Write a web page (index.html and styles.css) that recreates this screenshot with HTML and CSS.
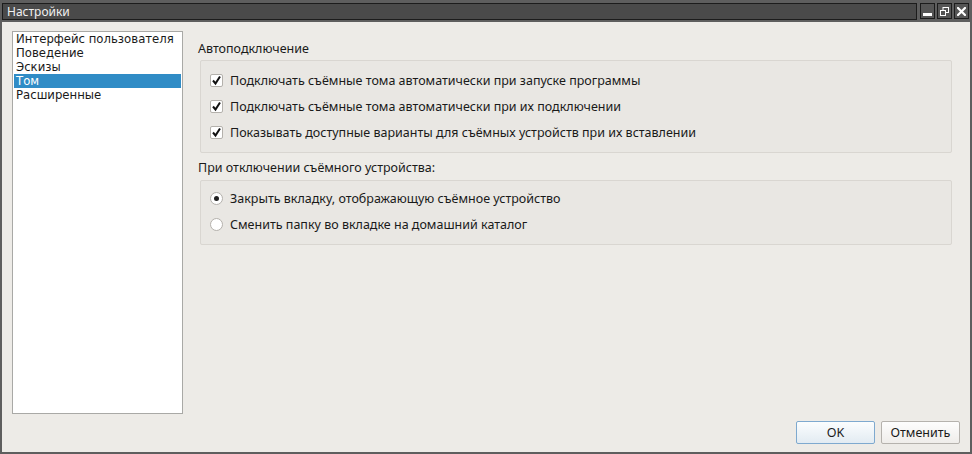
FILE: index.html
```html
<!DOCTYPE html>
<html lang="ru">
<head>
<meta charset="utf-8">
<title>Настройки</title>
<link rel="stylesheet" href="styles.css">
</head>
<body>
<div class="window">
  <div class="titlebar">
    <div class="title-field"><span class="title-text">Настройки</span></div>
    <div class="tb-btn" aria-label="minimize">
      <svg width="9" height="9" viewBox="0 0 9 9"><rect x="0" y="6" width="9" height="3" fill="#fff"/></svg>
    </div>
    <div class="tb-btn" aria-label="restore">
      <svg width="9" height="9" viewBox="0 0 9 9"><rect x="3" y="0.5" width="5.5" height="5" fill="none" stroke="#fff" stroke-width="1"/><rect x="0.5" y="3.5" width="5" height="5" fill="#555" stroke="#fff" stroke-width="1"/></svg>
    </div>
    <div class="tb-btn" aria-label="close">
      <svg width="9" height="9" viewBox="0 0 9 9"><path d="M1 1 L8 8 M8 1 L1 8" stroke="#fff" stroke-width="2.2" stroke-linecap="square"/></svg>
    </div>
  </div>
  <div class="body">
    <div class="main">
      <ul class="list">
        <li>Интерфейс пользователя</li>
        <li>Поведение</li>
        <li>Эскизы</li>
        <li class="selected">Том</li>
        <li>Расширенные</li>
      </ul>
      <div class="panel">
        <div class="group-label first">Автоподключение</div>
        <div class="group g1">
          <label class="row"><span class="check"><svg width="11" height="11" viewBox="0 0 11 11"><path d="M2 5.5 L4.5 8.5 L9 1.5" fill="none" stroke="#111" stroke-width="2"/></svg></span>Подключать съёмные тома автоматически при запуске программы</label>
          <label class="row"><span class="check"><svg width="11" height="11" viewBox="0 0 11 11"><path d="M2 5.5 L4.5 8.5 L9 1.5" fill="none" stroke="#111" stroke-width="2"/></svg></span>Подключать съёмные тома автоматически при их подключении</label>
          <label class="row"><span class="check"><svg width="11" height="11" viewBox="0 0 11 11"><path d="M2 5.5 L4.5 8.5 L9 1.5" fill="none" stroke="#111" stroke-width="2"/></svg></span>Показывать доступные варианты для съёмных устройств при их вставлении</label>
        </div>
        <div class="group-label second">При отключении съёмного устройства:</div>
        <div class="group g2">
          <label class="row"><span class="radio on"></span>Закрыть вкладку, отображающую съёмное устройство</label>
          <label class="row"><span class="radio"></span>Сменить папку во вкладке на домашний каталог</label>
        </div>
      </div>
    </div>
    <div class="footer">
      <button class="btn default">OK</button>
      <button class="btn">Отменить</button>
    </div>
  </div>
</div>
</body>
</html>
```
FILE: styles.css
```css
html, body {
  margin: 0;
  padding: 0;
}
body {
  width: 972px;
  height: 454px;
  overflow: hidden;
  font-family: "Noto Sans", "DejaVu Sans", sans-serif;
  font-size: 12.5px;
  color: #1a1a1a;
}
.window {
  width: 972px;
  height: 454px;
  box-sizing: border-box;
  display: flex;
  flex-direction: column;
  background: #5e5e5e;
  padding: 0 2px 2px 2px;
}
.titlebar {
  height: 22px;
  display: flex;
  align-items: center;
  gap: 2px;
  padding: 0 1px 0 0;
  box-sizing: border-box;
}
.title-field {
  flex: 1;
  height: 17px;
  background: #4a4a4a;
  border: 1px solid #1c1c1c;
  box-sizing: border-box;
  display: flex;
  align-items: center;
  padding-left: 4px;
  margin-right: 1px;
}
.title-text {
  color: #f0f0f0;
  font-size: 12px;
  line-height: 15px;
}
.tb-btn {
  width: 15px;
  height: 16px;
  background: #555;
  border: 1px solid #1c1c1c;
  box-sizing: border-box;
  display: flex;
  align-items: center;
  justify-content: center;
}
.body {
  flex: 1;
  background: #edebe7;
  display: flex;
  flex-direction: column;
  padding: 9px 10px 8px 10px;
  min-height: 0;
}
.main {
  flex: 1;
  display: flex;
  gap: 13px;
  min-height: 0;
}
.list {
  width: 171px;
  box-sizing: border-box;
  margin: 0;
  padding: 0 1px;
  list-style: none;
  background: #fff;
  border: 1px solid #a9a9a6;
  font-family: "DejaVu Sans", sans-serif;
  font-size: 11.7px;
}
.list li {
  height: 14px;
  line-height: 14px;
  padding-left: 2px;
  white-space: nowrap;
}
.list li.selected {
  background: #308cc6;
  color: #fff;
}
.panel {
  flex: 1;
  display: flex;
  flex-direction: column;
  padding: 9px 8px 0 2px;
}
.group-label {
  height: 18px;
  line-height: 18px;
}
.group-label.first {
  margin-bottom: 2px;
}
.group-label.second {
  margin-top: 6px;
  margin-bottom: 3px;
}
.group {
  margin-left: 2px;
  border: 1px solid #d9d6d1;
  border-radius: 2px;
  background: #e9e7e3;
  padding: 6px 9px 7px 9px;
  display: flex;
  flex-direction: column;
}
.group.g2 {
  padding-top: 4px;
}
.row {
  height: 26px;
  display: flex;
  align-items: center;
  gap: 7px;
  white-space: nowrap;
}
.check {
  width: 13px;
  height: 13px;
  box-sizing: border-box;
  background: #fff;
  border: 1px solid #b4b1ac;
  border-radius: 2px;
  display: flex;
  align-items: center;
  justify-content: center;
}
.radio {
  width: 13px;
  height: 13px;
  box-sizing: border-box;
  background: #fff;
  border: 1px solid #b4b1ac;
  border-radius: 50%;
  position: relative;
}
.radio.on::after {
  content: "";
  position: absolute;
  left: 3px;
  top: 3px;
  width: 5px;
  height: 5px;
  border-radius: 50%;
  background: #222;
}
.footer {
  display: flex;
  justify-content: flex-end;
  gap: 6px;
  margin-top: 7px;
}
.btn {
  width: 79px;
  height: 23px;
  font-family: inherit;
  font-size: 12.5px;
  color: #1a1a1a;
  border-radius: 2px;
  border: 1px solid #b5b2ad;
  background: linear-gradient(#fdfdfd, #efedea);
  padding: 0;
}
.btn.default {
  border-color: #7ea9cf;
  background: linear-gradient(#fbfdfe, #e2ebf2);
}
```
